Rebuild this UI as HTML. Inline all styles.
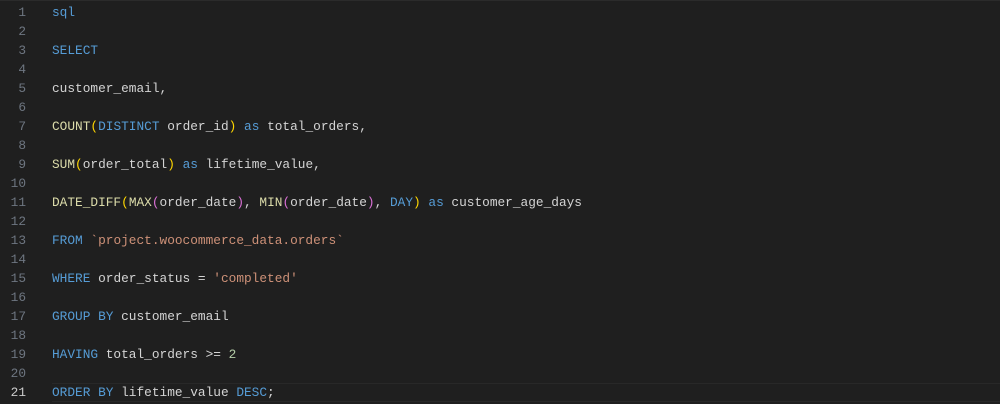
<!DOCTYPE html>
<html><head><style>
body{margin:0;width:1000px;height:404px;background:#1f1f1f;overflow:hidden;font-family:"Liberation Mono",monospace;font-size:12.8px;}
.top{position:absolute;left:0;top:0;width:1000px;height:1px;background:#2b2b2b}
.l{position:absolute;left:0;height:19px;line-height:19px;white-space:pre;width:1000px}
.n{position:absolute;right:974px;color:#6e7681;text-align:right}
.c{position:absolute;left:52px;color:#d4d4d4}
.cur{border-top:1px solid #282828;border-bottom:1px solid #282828;box-sizing:border-box}
.cur .n{color:#cccccc}
.k{color:#569cd6}.f{color:#dcdcaa}.p{color:#ffd700}.q{color:#da70d6}.s{color:#ce9178}.d{color:#b5cea8}
</style></head><body>
<div class="top"></div>
<div class="l" style="top:3px"><span class="n">1</span><span class="c"><span class="k">sql</span></span></div>
<div class="l" style="top:22px"><span class="n">2</span></div>
<div class="l" style="top:41px"><span class="n">3</span><span class="c"><span class="k">SELECT</span></span></div>
<div class="l" style="top:60px"><span class="n">4</span></div>
<div class="l" style="top:79px"><span class="n">5</span><span class="c">customer_email,</span></div>
<div class="l" style="top:98px"><span class="n">6</span></div>
<div class="l" style="top:117px"><span class="n">7</span><span class="c"><span class="f">COUNT</span><span class="p">(</span><span class="k">DISTINCT</span> order_id<span class="p">)</span> <span class="k">as</span> total_orders,</span></div>
<div class="l" style="top:136px"><span class="n">8</span></div>
<div class="l" style="top:155px"><span class="n">9</span><span class="c"><span class="f">SUM</span><span class="p">(</span>order_total<span class="p">)</span> <span class="k">as</span> lifetime_value,</span></div>
<div class="l" style="top:174px"><span class="n">10</span></div>
<div class="l" style="top:193px"><span class="n">11</span><span class="c"><span class="f">DATE_DIFF</span><span class="p">(</span><span class="f">MAX</span><span class="q">(</span>order_date<span class="q">)</span>, <span class="f">MIN</span><span class="q">(</span>order_date<span class="q">)</span>, <span class="k">DAY</span><span class="p">)</span> <span class="k">as</span> customer_age_days</span></div>
<div class="l" style="top:212px"><span class="n">12</span></div>
<div class="l" style="top:231px"><span class="n">13</span><span class="c"><span class="k">FROM</span> <span class="s">`project.woocommerce_data.orders`</span></span></div>
<div class="l" style="top:250px"><span class="n">14</span></div>
<div class="l" style="top:269px"><span class="n">15</span><span class="c"><span class="k">WHERE</span> order_status = <span class="s">'completed'</span></span></div>
<div class="l" style="top:288px"><span class="n">16</span></div>
<div class="l" style="top:307px"><span class="n">17</span><span class="c"><span class="k">GROUP BY</span> customer_email</span></div>
<div class="l" style="top:326px"><span class="n">18</span></div>
<div class="l" style="top:345px"><span class="n">19</span><span class="c"><span class="k">HAVING</span> total_orders &gt;= <span class="d">2</span></span></div>
<div class="l" style="top:364px"><span class="n">20</span></div>
<div class="l cur" style="top:383px;left:52px;width:948px"></div>
<div class="l" style="top:383px"><span class="n" style="color:#cccccc">21</span><span class="c"><span class="k">ORDER BY</span> lifetime_value <span class="k">DESC</span>;</span></div>
</body></html>
